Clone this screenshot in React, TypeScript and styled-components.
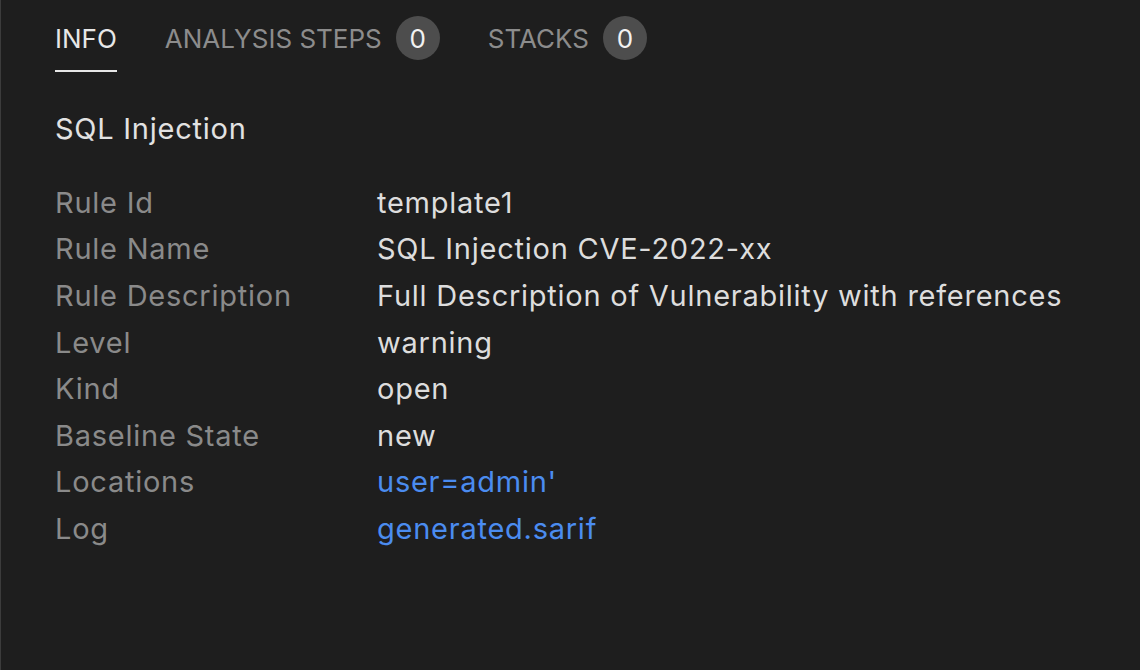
import React from 'react';
import styled, { createGlobalStyle } from 'styled-components';

const GlobalStyle = createGlobalStyle`
  html, body {
    margin: 0;
    padding: 0;
    background: #1e1e1e;
  }
  body {
    font-family: Inter, "Noto Sans", sans-serif;
    -webkit-font-smoothing: antialiased;
  }
`;

const Panel = styled.div`
  box-sizing: border-box;
  width: 1140px;
  height: 670px;
  background: #1e1e1e;
  border-left: 1px solid #3c3c3c;
  padding: 0 0 0 54px;
`;

const TabBar = styled.div`
  display: flex;
  gap: 48px;
`;

const Tab = styled.div<{ $active?: boolean }>`
  display: flex;
  align-items: center;
  gap: 14px;
  box-sizing: border-box;
  height: 72px;
  padding: 10px 0 4px;
  font-size: 26px;
  text-transform: uppercase;
  color: ${({ $active }) => ($active ? '#e7e7e7' : '#8c8c8c')};
  border-bottom: 2px solid ${({ $active }) => ($active ? '#e7e7e7' : 'transparent')};
`;

const Badge = styled.span`
  display: inline-flex;
  align-items: center;
  justify-content: center;
  width: 44px;
  height: 44px;
  border-radius: 50%;
  background: #4d4d4d;
  color: #f2f2f2;
  font-size: 26px;
`;

const Title = styled.h2`
  margin: 40px 0 33px;
  font-size: 29px;
  font-weight: 400;
  letter-spacing: 0.75px;
  line-height: 34px;
  color: #e2e2e2;
`;

const Properties = styled.div`
  display: grid;
  grid-template-columns: 322px auto;
  grid-auto-rows: 46.6px;
  align-items: center;
  font-size: 29px;
  letter-spacing: 0.75px;
`;

const Label = styled.div`
  color: #8a8a8a;
`;

const Value = styled.div`
  color: #dddddd;
`;

const Link = styled.a`
  color: #4b8cf0;
  text-decoration: none;
  cursor: pointer;
`;

const rows: Array<{ label: string; value: string; link?: boolean }> = [
  { label: 'Rule Id', value: 'template1' },
  { label: 'Rule Name', value: 'SQL Injection CVE-2022-xx' },
  { label: 'Rule Description', value: 'Full Description of Vulnerability with references' },
  { label: 'Level', value: 'warning' },
  { label: 'Kind', value: 'open' },
  { label: 'Baseline State', value: 'new' },
  { label: 'Locations', value: "user=admin'", link: true },
  { label: 'Log', value: 'generated.sarif', link: true },
];

const App: React.FC = () => {
  return (
    <>
      <GlobalStyle />
      <Panel>
        <TabBar>
          <Tab $active>Info</Tab>
          <Tab>
            Analysis Steps <Badge>0</Badge>
          </Tab>
          <Tab>
            Stacks <Badge>0</Badge>
          </Tab>
        </TabBar>

        <Title>SQL Injection</Title>

        <Properties>
          {rows.map((row) => (
            <React.Fragment key={row.label}>
              <Label>{row.label}</Label>
              <Value>{row.link ? <Link>{row.value}</Link> : row.value}</Value>
            </React.Fragment>
          ))}
        </Properties>
      </Panel>
    </>
  );
};

export default App;
